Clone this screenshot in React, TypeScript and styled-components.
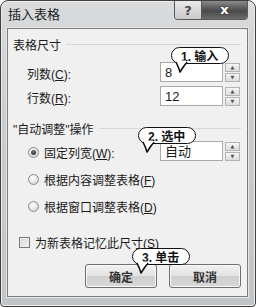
import React from "react";
import styled, { createGlobalStyle } from "styled-components";

const GlobalStyle = createGlobalStyle`
  html, body {
    margin: 0;
    padding: 0;
    background: #ffffff;
  }
  * {
    box-sizing: border-box;
  }
`;

const FONT = `"Liberation Sans", "Noto Sans CJK SC", sans-serif`;

function SpinBox({ value }: { value: string }) {
  return (
    <SpinWrap>
      <Field>{value}</Field>
      <SpinButtons>
        <SpinButton>▲</SpinButton>
        <SpinButton>▼</SpinButton>
      </SpinButtons>
    </SpinWrap>
  );
}

function Callout({
  text,
  left,
  top,
}: {
  text: string;
  left: number;
  top: number;
}) {
  return (
    <Bubble style={{ left, top }}>
      {text}
      <Tail viewBox="0 0 14 12" width="14" height="12">
        <path
          d="M1 0 Q4 6 5 10 Q8 5 12 0"
          fill="#ffffff"
          stroke="#111"
          strokeWidth="1.6"
          strokeLinejoin="round"
        />
        <rect x="2" y="-1.5" width="9" height="2.5" fill="#ffffff" />
      </Tail>
    </Bubble>
  );
}

function App() {
  return (
    <>
      <GlobalStyle />
      <Window>
        <TitleBar>
          <Title>插入表格</Title>
          <Controls>
            <HelpButton>?</HelpButton>
            <CloseButton>x</CloseButton>
          </Controls>
        </TitleBar>
        <Panel>
          <Heading>
            表格尺寸
            <Rule />
          </Heading>
          <FieldRow $top={11}>
            <Label $indent={14}>
              列数(<u>C</u>):
            </Label>
            <SpinBox value="8" />
          </FieldRow>
          <FieldRow $top={4}>
            <Label $indent={14}>
              行数(<u>R</u>):
            </Label>
            <SpinBox value="12" />
          </FieldRow>
          <Heading $top={15}>
            <span>"自动调整"操作</span>
            <Rule />
          </Heading>
          <FieldRow $top={6}>
            <Choice $indent={15}>
              <Radio $checked />
              <span>
                固定列宽(<u>W</u>):
              </span>
            </Choice>
            <SpinBox value="自动" />
          </FieldRow>
          <FieldRow $top={7}>
            <Choice $indent={15}>
              <Radio />
              <span>
                根据内容调整表格(<u>F</u>)
              </span>
            </Choice>
          </FieldRow>
          <FieldRow $top={7}>
            <Choice $indent={15}>
              <Radio />
              <span>
                根据窗口调整表格(<u>D</u>)
              </span>
            </Choice>
          </FieldRow>
          <FieldRow $top={16}>
            <Choice $indent={6}>
              <Check />
              <span>
                为新表格记忆此尺寸(<u>S</u>)
              </span>
            </Choice>
          </FieldRow>
          <ButtonRow>
            <PushButton>确定</PushButton>
            <PushButton>取消</PushButton>
          </ButtonRow>
          <Callout text="1. 输入" left={163} top={18} />
          <Callout text="2. 选中" left={130} top={98} />
          <Callout text="3. 单击" left={124} top={219} />
        </Panel>
      </Window>
    </>
  );
}

export default App;

const Window = styled.div`
  width: 256px;
  height: 307px;
  display: flex;
  flex-direction: column;
  padding: 0 7px 9px 6px;
  background: linear-gradient(180deg, #d9dbdd 0%, #c9ccce 40%, #c2c5c7 100%);
  border: 1px solid #3f3f3f;
  border-radius: 8px 8px 4px 4px;
  box-shadow: inset 0 0 0 1px #eeeeee;
  font-family: ${FONT};
  color: #1a1a1a;
`;

const TitleBar = styled.div`
  height: 27px;
  display: flex;
  justify-content: space-between;
  align-items: flex-start;
`;

const Title = styled.div`
  padding: 5px 0 0 1px;
  font-size: 13px;
  line-height: 17px;
  color: #222;
`;

const Controls = styled.div`
  display: flex;
  border: 1px solid #5a5a5a;
  border-top: none;
  border-radius: 0 0 4px 4px;
  overflow: hidden;
`;

const HelpButton = styled.div`
  width: 27px;
  height: 18px;
  display: flex;
  align-items: center;
  justify-content: center;
  font-size: 13px;
  font-weight: bold;
  color: #4a4a4a;
  background: linear-gradient(180deg, #eaeaea 0%, #c8c8c8 100%);
  border-right: 1px solid #5a5a5a;
  font-family: "DejaVu Sans", sans-serif;
`;

const CloseButton = styled.div`
  width: 45px;
  height: 18px;
  display: flex;
  align-items: center;
  justify-content: center;
  padding-bottom: 2px;
  font-size: 13px;
  font-weight: bold;
  color: #ffffff;
  background: linear-gradient(180deg, #8a8a8a 0%, #4a4a4a 55%, #6a6a6a 100%);
  font-family: "DejaVu Sans", sans-serif;
  text-shadow: 0 0 2px #222;
`;

const Panel = styled.div`
  position: relative;
  flex: 1;
  display: flex;
  flex-direction: column;
  padding: 8px 6px 0 5px;
  background: #f0f0f0;
  border: 1px solid #7c7c7c;
  box-shadow: 0 0 0 1px #e6e6e6;
`;

const Heading = styled.div<{ $top?: number }>`
  display: flex;
  align-items: center;
  gap: 5px;
  height: 14px;
  margin-top: ${({ $top }) => $top ?? 0}px;
  font-size: 12px;
  white-space: nowrap;
`;

const Rule = styled.div`
  flex: 1;
  height: 1px;
  background: #d8d8d8;
`;

const FieldRow = styled.div<{ $top: number }>`
  display: flex;
  align-items: center;
  justify-content: space-between;
  height: 20px;
  margin-top: ${({ $top }) => $top}px;
  font-size: 12px;
`;

const Label = styled.div<{ $indent: number }>`
  padding-left: ${({ $indent }) => $indent}px;
  padding-top: 3px;
`;

const Choice = styled.div<{ $indent: number }>`
  display: flex;
  align-items: center;
  gap: 5px;
  padding-left: ${({ $indent }) => $indent}px;
  padding-top: 3px;
  white-space: nowrap;
`;

const Radio = styled.span<{ $checked?: boolean }>`
  position: relative;
  width: 11px;
  height: 11px;
  border-radius: 50%;
  border: 1px solid #8c8c8c;
  background: radial-gradient(circle at 40% 35%, #ffffff 0%, #d6d6d6 80%);
  &::after {
    content: "";
    display: ${({ $checked }) => ($checked ? "block" : "none")};
    position: absolute;
    left: 2px;
    top: 2px;
    width: 5px;
    height: 5px;
    border-radius: 50%;
    background: radial-gradient(circle at 40% 35%, #777 0%, #222 90%);
  }
`;

const Check = styled.span`
  width: 11px;
  height: 11px;
  border: 1px solid #7a7a7a;
  background: linear-gradient(135deg, #d4d4d4 0%, #f4f4f4 100%);
  box-shadow: inset 0 0 0 1px #eaeaea;
`;

const SpinWrap = styled.div`
  display: flex;
  align-items: center;
  gap: 2px;
  margin-right: 1px;
`;

const Field = styled.div`
  width: 63px;
  height: 20px;
  padding: 1px 0 0 4px;
  background: #ffffff;
  border: 1px solid #aaaaaa;
  font-size: 13px;
  line-height: 17px;
`;

const SpinButtons = styled.div`
  display: flex;
  flex-direction: column;
  gap: 1px;
`;

const SpinButton = styled.div`
  width: 15px;
  height: 9px;
  display: flex;
  align-items: center;
  justify-content: center;
  font-size: 5px;
  color: #555;
  background: linear-gradient(180deg, #f6f6f6 0%, #dcdcdc 100%);
  border: 1px solid #b4b4b4;
  font-family: "DejaVu Sans", sans-serif;
`;

const ButtonRow = styled.div`
  display: flex;
  justify-content: flex-end;
  gap: 12px;
  margin-top: 13px;
`;

const PushButton = styled.div`
  width: 72px;
  height: 24px;
  display: flex;
  align-items: center;
  justify-content: center;
  font-size: 12px;
  font-weight: bold;
  color: #333;
  border: 1px solid #6f6f6f;
  border-radius: 3px;
  background: linear-gradient(180deg, #f2f2f2 0%, #e2e2e2 50%, #cfcfcf 51%, #d8d8d8 100%);
  box-shadow: inset 0 0 0 1px #f8f8f8;
`;

const Bubble = styled.div`
  position: absolute;
  height: 17px;
  padding: 0 10px 0 9px;
  display: flex;
  align-items: center;
  font-size: 12px;
  font-weight: bold;
  color: #111;
  background: #ffffff;
  border: 1.6px solid #111;
  border-radius: 9px;
  white-space: nowrap;
`;

const Tail = styled.svg`
  position: absolute;
  left: 3px;
  top: 14px;
  overflow: visible;
`;
